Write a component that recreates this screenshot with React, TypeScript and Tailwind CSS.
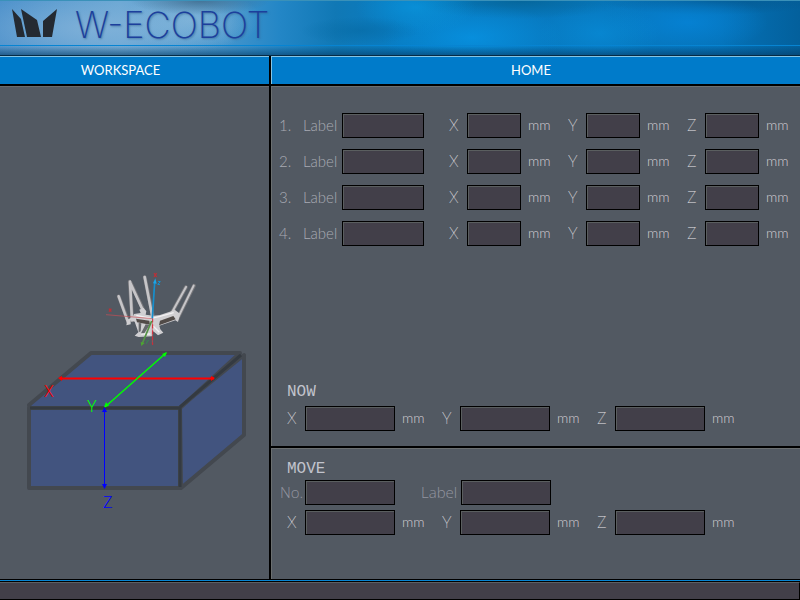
import React from "react";

const inputLook =
  "block h-[25px] min-w-0 shrink-0 rounded-none border border-black bg-[#423f49] px-1 font-['Lato',sans-serif] text-sm text-gray-200 shadow-[inset_1px_1px_0_#5a5e5f] outline-none";

function AxisField({ id, axis, wide }: { id: string; axis: string; wide?: boolean }) {
  return (
    <div className="flex items-center leading-5">
      <label htmlFor={id} className="w-[18px] shrink-0 font-['Roboto',sans-serif] text-[16px] font-thin text-[#ebe8ec]">
        {axis}
      </label>
      <input id={id} type="text" className={`${inputLook} ${wide ? "w-[90px]" : "w-[54px]"}`} />
      <span className="w-[47px] shrink-0 pb-0.5 pl-[7px] font-['Lato',sans-serif] text-[14px] font-light text-[#d2ced2]">mm</span>
    </div>
  );
}

function AxisGroup({ name, wide }: { name: string; wide?: boolean }) {
  return (
    <div className="flex">
      <AxisField id={`${name}-x`} axis="X" wide={wide} />
      <AxisField id={`${name}-y`} axis="Y" wide={wide} />
      <AxisField id={`${name}-z`} axis="Z" wide={wide} />
    </div>
  );
}

function PositionRow({ index }: { index: number }) {
  return (
    <div className="flex items-center font-['Lato',sans-serif] text-[15px] leading-5 font-light text-[#a8aab3]">
      <span className="w-6 shrink-0 pb-0.5">{index}.</span>
      <label htmlFor={`home-${index}-label`} className="w-[39px] shrink-0 pb-0.5">
        Label
      </label>
      <input id={`home-${index}-label`} type="text" className={`${inputLook} mr-[25px] w-[82px]`} />
      <AxisGroup name={`home-${index}`} />
    </div>
  );
}

function Robot() {
  return (
    <svg x="100" y="265" width="100" height="85" viewBox="0 0 300 255" fill="none">
      <g stroke="#77777b" strokeLinecap="round">
        <path d="M56 94 86 172M89 50 97 166M92 54 132 139M134 36 158 150M258 66 216 142M282 62 232 162" strokeWidth="11" />
      </g>
      <g stroke="#c6c5c8" strokeLinecap="round">
        <path d="M56 94 84 172M90 50 96 166M90 52 130 139M134 36 156 150" strokeWidth="8" />
        <path d="M258 66 216 142M281 62 232 162" strokeWidth="6" />
      </g>
      <path d="M118 134 130 128 139 139 137 149 162 152 180 150 216 138 222 133 240 146 234 171 226 166 178 182 181 193 190 203 174 211 160 199 156 214 116 216 104 212 115 202 104 170 92 166 92 178 79 181 82 164 98 156 102 147 122 144Z" fill="#d0cfd2" />
      <path d="M108 161 148 167 150 179 111 172ZM180 167 220 153 227 163 177 181Z" fill="#514b48" />
      <path d="M116 174 124 175 122 199 116 202ZM137 178 149 180 130 209 123 205Z" fill="#66686c" />
      <path d="M109 151 154 160 180 154 221 143M124 207 151 207M160 184 178 202" stroke="#f2f1f3" strokeWidth="4" />
      <path d="M18 149 158 161M157 168V238" stroke="#c94d54" strokeWidth="2" />
      <path d="M158 160V240" stroke="#d52936" strokeWidth="3" strokeDasharray="12 6" />
      <path d="M157 160 164 53" stroke="#168fcd" strokeWidth="5" />
      <path d="M159 55 166 40 170 56Z" fill="#1aa5e8" />
      <path d="M155 168 127 235" stroke="#559246" strokeWidth="5" />
      <path d="m122 231 2 12 10-9Z" fill="#4da530" />
      <path d="m27 131 7 9M34 131l-7 9M162 24l8 12M170 24l-8 12" stroke="#bd3037" strokeWidth="4" />
      <path d="m174 49 7 1-8 8 7 1" stroke="#168fcd" strokeWidth="3" />
      <path d="m138 226 4 4 4-5M142 230l-3 6" stroke="#348c51" strokeWidth="3" />
    </svg>
  );
}

function WorkspaceDrawing() {
  return (
    <svg width="269" height="260" viewBox="0 260 269 260" role="img" aria-label="Robot workspace" className="block">
      <g fill="#42547f" stroke="#43484f" strokeWidth="4" strokeLinejoin="round">
        <path d="M180 407 244 355V435L181 488Z" />
        <path d="M29 408H180V488H29Z" />
        <path d="M29 405 91 353H240L180 408H30Z" />
      </g>
      <path d="M30 408H180V487M180 407 241 355" fill="none" stroke="#343a41" strokeWidth="3" />
      <path d="M60 378.500H214" stroke="#f00" strokeWidth="2" />
      <path d="m58 378 4-2v5ZM215 378l-4-2v5Z" fill="#f00" />
      <path d="M105 407 166 353" stroke="#0f0" strokeWidth="1.500" />
      <path d="m167 352-5 2 3 3ZM104 407l2-5 3 4Z" fill="#0f0" />
      <path d="M104.500 408V488" stroke="#00f" />
      <path d="m104.500 407-2.500 5h5ZM104.500 489l-2.500-5h5Z" fill="#00f" />
      <g className="font-['Roboto',sans-serif] text-[16px] font-light">
        <text x="44" y="397" fill="#f00">X</text>
        <text x="87" y="412" fill="#0f0">Y</text>
        <text x="103" y="508" fill="#00f">Z</text>
      </g>
      <Robot />
    </svg>
  );
}

function Header() {
  return (
    <header className="flex h-14 shrink-0 flex-col border-t border-b border-t-[#3a91b9] border-b-[#062b45] bg-[radial-gradient(ellipse_70px_14px_at_25%_0%,#385f7daa,transparent),radial-gradient(ellipse_70px_30px_at_24%_35%,#8dbbdcaa,transparent),radial-gradient(ellipse_150px_40px_at_12%_50%,#86b4dacc,transparent),radial-gradient(ellipse_60px_14px_at_45%_55%,#0567a088,transparent),radial-gradient(ellipse_60px_26px_at_52%_12%,#0a98e0aa,transparent),radial-gradient(ellipse_90px_34px_at_59%_68%,#0795e6bb,transparent),radial-gradient(ellipse_60px_30px_at_75%_60%,#088cd8aa,transparent),radial-gradient(ellipse_80px_30px_at_86%_40%,#0684d8cc,transparent),radial-gradient(ellipse_110px_18px_at_65%_0%,#05608fbb,transparent),radial-gradient(ellipse_110px_14px_at_89%_0%,#055184bb,transparent),linear-gradient(90deg,#4a8fca,#66a5d3_15%,#4595cc_28%,#2386c6_35%,#1078b5_42%,#087cc2_50%,#0779c0_75%,#0572b8_90%,#03609c)]">
      <div className="flex h-11 shrink-0 items-center pl-3">
        <svg width="46" height="29" viewBox="0 0 46 29" className="shrink-0" aria-hidden="true">
          <path d="M0 0 9 10 13 28H5ZM9 0 25 11 29 28H15ZM45 0 40 28H31V12Z" fill="#242a32" />
        </svg>
        <h1 className="mt-1 ml-[17px] font-['Inter',sans-serif] text-[36px] leading-[44px] font-extralight text-[#1c3f9c] [text-shadow:1px_1px_2px_#315f8a99]">
          W-ECOBOT
        </h1>
      </div>
      <div className="flex-1 border-t border-[#0784d2] bg-linear-to-b from-transparent to-[#063c6699]" />
    </header>
  );
}

const barLook =
  "h-7 border-t border-[#85c5e5] bg-[#007bca] text-center font-['Lato',sans-serif] text-[13px] leading-[26px] font-normal text-white";

const headingLook = "font-['Liberation_Mono',monospace] text-[16px] leading-5 font-normal text-[#c2c4cd]";

export default function App() {
  return (
    <div className="flex min-h-screen flex-col bg-[#525962]">
      <Header />
      <main className="flex flex-1">
        <section className="flex w-[271px] shrink-0 flex-col border-r-2 border-black">
          <h2 className={`${barLook} pr-7`}>WORKSPACE</h2>
          <div className="flex flex-1 flex-col justify-end border-t-2 border-black pb-[59px] shadow-[inset_0_1px_0_#686b6e]">
            <WorkspaceDrawing />
          </div>
        </section>
        <div className="flex flex-1 flex-col border-r border-black">
          <section className="flex flex-1 flex-col">
            <h2 className={`${barLook} border-l pr-4`}>HOME</h2>
            <div className="flex flex-1 flex-col border-t-2 border-black">
              <div className="flex flex-1 flex-col justify-between border-t border-l border-[#6b6f70] pt-[26px] pb-[15px]">
                <div className="flex flex-col gap-[11px] pl-[7px]">
                  <PositionRow index={1} />
                  <PositionRow index={2} />
                  <PositionRow index={3} />
                  <PositionRow index={4} />
                </div>
                <div className="pl-[15px]">
                  <h3 className={`${headingLook} mb-1`}>NOW</h3>
                  <AxisGroup name="now" wide />
                </div>
              </div>
            </div>
          </section>
          <section className="border-t-2 border-black">
            <div className="border-t border-l border-[#6b6f70] pt-[10px] pb-11">
              <h3 className={`${headingLook} mb-px pl-[15px]`}>MOVE</h3>
              <div className="flex items-center pl-2 font-['Open_Sans',sans-serif] text-[15px] leading-5 font-light text-[#9295a0]">
                <label htmlFor="move-no" className="w-[25px] shrink-0 pb-0.5">No.</label>
                <input id="move-no" type="text" className={`${inputLook} w-[90px]`} />
                <label htmlFor="move-label" className="ml-[26px] w-10 shrink-0 pb-0.5">Label</label>
                <input id="move-label" type="text" className={`${inputLook} w-[90px]`} />
              </div>
              <div className="mt-[5px] pl-[15px]">
                <AxisGroup name="move" wide />
              </div>
            </div>
          </section>
        </div>
      </main>
      <footer className="h-[21px] shrink-0 border-t border-b border-black">
        <div className="h-full border-t border-[#0784d2] bg-black pt-px">
          <div className="h-full border-t border-r border-t-[#5c6065] border-r-black bg-[#423f49]" />
        </div>
      </footer>
    </div>
  );
}
